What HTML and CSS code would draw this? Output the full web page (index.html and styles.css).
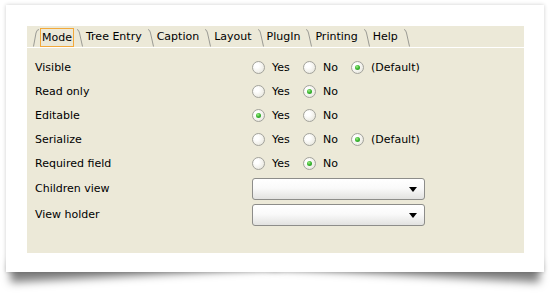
FILE: index.html
```html
<!DOCTYPE html>
<html>
<head>
<meta charset="utf-8">
<link rel="stylesheet" href="styles.css">
</head>
<body>
<div class="sheet">
<div class="card">
  <div class="panel">
    <div class="tabs">
      <svg class="lead" width="6" height="19" viewBox="0 0 6 19"><path d="M0.5 18.5 L3 5 Q3.8 1.5 6 1.5"/></svg>
      <span class="tab first"><span class="focus">Mode</span></span>
      <svg class="sep" width="6" height="19" viewBox="0 0 6 19"><path d="M0 1.5 Q1.8 1.5 2.5 5 L5.5 18.5"/></svg>
      <span class="tab">Tree Entry</span>
      <svg class="sep" width="6" height="19" viewBox="0 0 6 19"><path d="M0 1.5 Q1.8 1.5 2.5 5 L5.5 18.5"/></svg>
      <span class="tab">Caption</span>
      <svg class="sep" width="6" height="19" viewBox="0 0 6 19"><path d="M0 1.5 Q1.8 1.5 2.5 5 L5.5 18.5"/></svg>
      <span class="tab">Layout</span>
      <svg class="sep" width="6" height="19" viewBox="0 0 6 19"><path d="M0 1.5 Q1.8 1.5 2.5 5 L5.5 18.5"/></svg>
      <span class="tab">PlugIn</span>
      <svg class="sep" width="6" height="19" viewBox="0 0 6 19"><path d="M0 1.5 Q1.8 1.5 2.5 5 L5.5 18.5"/></svg>
      <span class="tab">Printing</span>
      <svg class="sep" width="6" height="19" viewBox="0 0 6 19"><path d="M0 1.5 Q1.8 1.5 2.5 5 L5.5 18.5"/></svg>
      <span class="tab">Help</span>
      <svg class="sep" width="6" height="19" viewBox="0 0 6 19"><path d="M0 1.5 Q1.8 1.5 2.5 5 L5.5 18.5"/></svg>
    </div>
    <div class="form">
      <div class="row">
        <span class="label">Visible</span>
        <div class="options">
          <span class="opt yes"><span class="radio"></span>Yes</span>
          <span class="opt no"><span class="radio"></span>No</span>
          <span class="opt"><span class="radio on"></span>(Default)</span>
        </div>
      </div>
      <div class="row">
        <span class="label">Read only</span>
        <div class="options">
          <span class="opt yes"><span class="radio"></span>Yes</span>
          <span class="opt no"><span class="radio on"></span>No</span>
        </div>
      </div>
      <div class="row">
        <span class="label">Editable</span>
        <div class="options">
          <span class="opt yes"><span class="radio on"></span>Yes</span>
          <span class="opt no"><span class="radio"></span>No</span>
        </div>
      </div>
      <div class="row">
        <span class="label">Serialize</span>
        <div class="options">
          <span class="opt yes"><span class="radio"></span>Yes</span>
          <span class="opt no"><span class="radio"></span>No</span>
          <span class="opt"><span class="radio on"></span>(Default)</span>
        </div>
      </div>
      <div class="row">
        <span class="label">Required field</span>
        <div class="options">
          <span class="opt yes"><span class="radio"></span>Yes</span>
          <span class="opt no"><span class="radio on"></span>No</span>
        </div>
      </div>
      <div class="row select-row">
        <span class="label">Children view</span>
        <div class="select"><span class="arrow"></span></div>
      </div>
      <div class="row select-row">
        <span class="label">View holder</span>
        <div class="select"><span class="arrow"></span></div>
      </div>
    </div>
  </div>
</div>
</div>
</body>
</html>
```
FILE: styles.css
```css
html {
  background: #fff;
  height: 100%;
}
body {
  margin: 0;
  padding: 5px 0 0 6px;
  box-sizing: border-box;
  min-height: 302px;
  height: 100%;
  font-family: "DejaVu Sans", "Liberation Sans", sans-serif;
  font-size: 11px;
  color: #000;
}
.sheet {
  position: relative;
  isolation: isolate;
  width: 538px;
  height: 267px;
}
.sheet::before,
.sheet::after {
  content: "";
  position: absolute;
  z-index: 0;
  bottom: 16px;
  width: 50%;
  height: 20px;
  box-shadow: 0 19px 9px rgba(0, 0, 0, 0.5);
}
.sheet::before {
  left: 3px;
  transform: rotate(-3.2deg);
}
.sheet::after {
  right: 3px;
  transform: rotate(3.2deg);
}
.card {
  position: relative;
  z-index: 1;
  width: 538px;
  height: 267px;
  padding: 21px 0 0 21px;
  box-sizing: border-box;
  background: #fff;
  box-shadow: 0 0 4px rgba(0, 0, 0, 0.2);
}
.panel {
  width: 497px;
  height: 227px;
  background: #ece9d8;
}
.tabs {
  display: flex;
  align-items: flex-start;
  height: 22px;
  padding: 2px 0 0 6px;
  box-sizing: border-box;
  border-bottom: 1px solid #fff;
}
.tabs svg {
  flex: none;
  display: block;
}
.tabs path {
  fill: none;
  stroke: #9a9a94;
  stroke-width: 1;
}
.tab {
  height: 19px;
  line-height: 18px;
  padding: 0 6px 0 3px;
  white-space: nowrap;
}
.tab.first {
  padding: 0 3px 0 1px;
}
.focus {
  display: block;
  height: 19px;
  box-sizing: border-box;
  padding: 0 1px;
  line-height: 17px;
  border: 1px solid #f3a93a;
}
.form {
  padding: 7px 0 0 8px;
}
.row {
  display: flex;
  align-items: center;
  height: 24px;
}
.label {
  width: 217px;
  flex: none;
}
.options {
  display: flex;
  align-items: center;
}
.opt {
  display: flex;
  align-items: center;
  gap: 7px;
}
.opt.yes {
  width: 51px;
}
.opt.no {
  width: 48px;
}
.radio {
  width: 13px;
  height: 13px;
  box-sizing: border-box;
  border: 1px solid #a3a39c;
  border-radius: 50%;
  background: radial-gradient(circle at 35% 35%, #ffffff 20%, #f1f0ea 60%, #dcdcd3 100%);
  position: relative;
}
.radio.on::after {
  content: "";
  position: absolute;
  left: 3px;
  top: 3px;
  width: 5px;
  height: 5px;
  border-radius: 50%;
  background: radial-gradient(circle at 40% 35%, #a6ee8c 0%, #3cb832 45%, #1e8c1e 100%);
}
.select-row {
  height: 26px;
  align-items: flex-start;
}
.select-row .label {
  line-height: 24px;
  padding-top: 2px;
}
.select {
  margin-top: 3px;
  width: 173px;
  height: 22px;
  box-sizing: border-box;
  border: 1px solid #8d8d8a;
  border-radius: 3px;
  background: linear-gradient(#ffffff 0%, #fafafa 45%, #e2e2e0 100%);
  display: flex;
  align-items: center;
  justify-content: flex-end;
  padding-right: 7px;
}
.arrow {
  width: 0;
  height: 0;
  border-left: 4px solid transparent;
  border-right: 4px solid transparent;
  border-top: 5px solid #000;
}
```
